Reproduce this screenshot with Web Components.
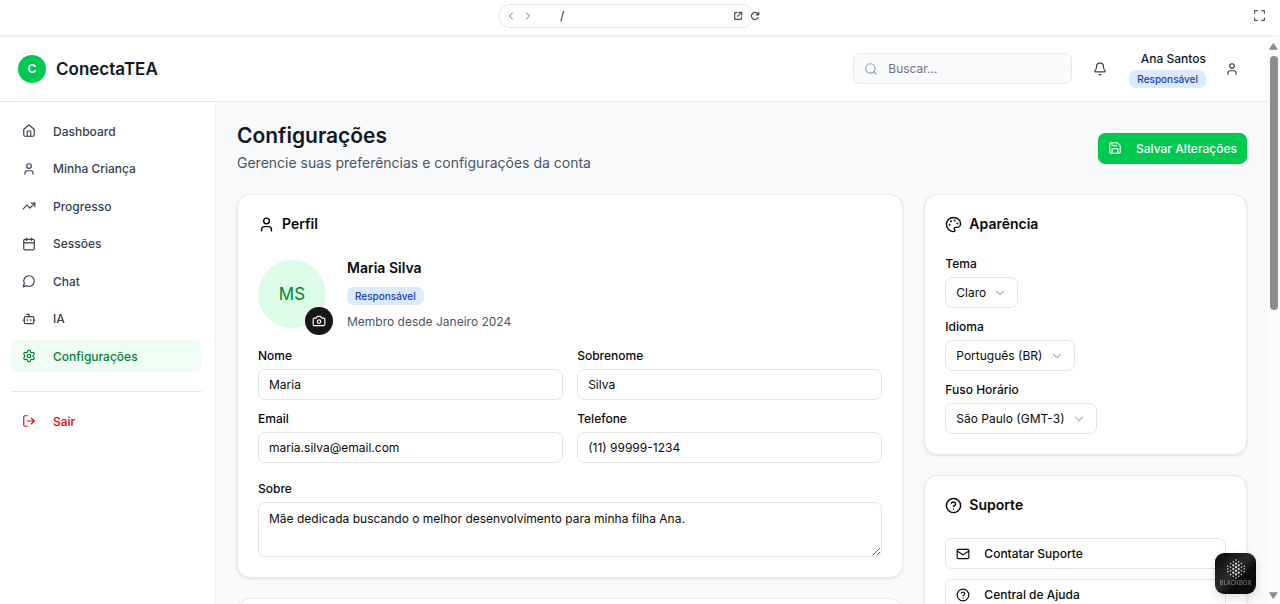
<!DOCTYPE html>
<html lang="pt-BR">
<head>
<meta charset="utf-8">
<meta name="viewport" content="width=device-width, initial-scale=1">
<title>ConectaTEA – Configurações</title>
<style>
html, body { margin: 0; height: 100%; }
body { font-family: Inter, "Liberation Sans", sans-serif; font-size: 12px; color: #0a0a0a; background: #fff; overflow: hidden; }
</style>
</head>
<body>
<preview-shell>
  <app-header slot="header"></app-header>
  <app-sidebar slot="sidebar"></app-sidebar>
  <settings-page></settings-page>
</preview-shell>

<script>
const ICONS = {
  home: '<path d="M15 21v-8a1 1 0 0 0-1-1h-4a1 1 0 0 0-1 1v8"/><path d="M3 10a2 2 0 0 1 .709-1.528l7-5.999a2 2 0 0 1 2.582 0l7 5.999A2 2 0 0 1 21 10v9a2 2 0 0 1-2 2H5a2 2 0 0 1-2-2z"/>',
  user: '<path d="M19 21v-2a4 4 0 0 0-4-4H9a4 4 0 0 0-4 4v2"/><circle cx="12" cy="7" r="4"/>',
  trend: '<path d="M16 7h6v6"/><path d="m22 7-8.500 8.500-5-5L2 17"/>',
  calendar: '<path d="M8 2v4M16 2v4M3 10h18"/><rect width="18" height="18" x="3" y="4" rx="2"/>',
  chat: '<path d="M7.900 20A9 9 0 1 0 4 16.100L2 22Z"/>',
  bot: '<path d="M12 8V4H8"/><rect width="16" height="12" x="4" y="8" rx="2"/><path d="M2 14h2M20 14h2M15 13v2M9 13v2"/>',
  settings: '<path d="M9.671 4.136a2.340 2.340 0 0 1 4.659 0 2.340 2.340 0 0 0 3.319 1.915 2.340 2.340 0 0 1 2.330 4.033 2.340 2.340 0 0 0 0 3.831 2.340 2.340 0 0 1-2.330 4.033 2.340 2.340 0 0 0-3.319 1.915 2.340 2.340 0 0 1-4.659 0 2.340 2.340 0 0 0-3.320-1.915 2.340 2.340 0 0 1-2.330-4.033 2.340 2.340 0 0 0 0-3.831A2.340 2.340 0 0 1 6.350 6.051a2.340 2.340 0 0 0 3.319-1.915"/><circle cx="12" cy="12" r="3"/>',
  logout: '<path d="m16 17 5-5-5-5M21 12H9M9 21H5a2 2 0 0 1-2-2V5a2 2 0 0 1 2-2h4"/>',
  search: '<circle cx="11" cy="11" r="8"/><path d="m21 21-4.300-4.300"/>',
  bell: '<path d="M10.268 21a2 2 0 0 0 3.464 0"/><path d="M3.262 15.326A1 1 0 0 0 4 17h16a1 1 0 0 0 .740-1.673C19.410 13.956 18 12.499 18 8A6 6 0 0 0 6 8c0 4.499-1.411 5.956-2.738 7.326"/>',
  save: '<path d="M15.200 3a2 2 0 0 1 1.400.600l3.800 3.800a2 2 0 0 1 .600 1.400V19a2 2 0 0 1-2 2H5a2 2 0 0 1-2-2V5a2 2 0 0 1 2-2z"/><path d="M17 21v-7a1 1 0 0 0-1-1H8a1 1 0 0 0-1 1v7M7 3v4a1 1 0 0 0 1 1h7"/>',
  camera: '<path d="M14.500 4h-5L7 7H4a2 2 0 0 0-2 2v9a2 2 0 0 0 2 2h16a2 2 0 0 0 2-2V9a2 2 0 0 0-2-2h-3z"/><circle cx="12" cy="13" r="3"/>',
  palette: '<path d="M12 22a1 1 0 0 1 0-20 10 9 0 0 1 10 9 5 5 0 0 1-5 5h-2.250a1.750 1.750 0 0 0-1.400 2.800l.300.400a1.750 1.750 0 0 1-1.400 2.800z"/><g fill="currentColor"><circle cx="13.500" cy="6.500" r=".5"/><circle cx="17.500" cy="10.500" r=".5"/><circle cx="6.500" cy="12.500" r=".5"/><circle cx="8.500" cy="7.500" r=".5"/></g>',
  help: '<circle cx="12" cy="12" r="10"/><path d="M9.090 9a3 3 0 0 1 5.830 1c0 2-3 3-3 3M12 17h.01"/>',
  mail: '<rect width="20" height="16" x="2" y="4" rx="2"/><path d="m22 7-8.991 5.727a2 2 0 0 1-2.009 0L2 7"/>',
  down: '<path d="m6 9 6 6 6-6"/>',
  left: '<path d="m15 18-6-6 6-6"/>',
  right: '<path d="m9 18 6-6-6-6"/>',
  external: '<path d="M10 4H4v16h16v-6M14 3h7v7M20 4l-9 9"/>',
  reload: '<path d="M19.500 16A8.500 8.500 0 1 1 18 6l3 3M21 3v6h-6"/>',
  expand: '<path d="M3 8V3h5M16 3h5v5M21 16v5h-5M8 21H3v-5"/>',
  caretUp: '<path d="m12 6 8 12H4Z" fill="currentColor"/>',
  caretDown: '<path d="m12 18 8-12H4Z" fill="currentColor"/>'
};

/* Registers an element whose shadow root is rendered from its attributes. */
function define(tag, render) {
  customElements.define(tag, class extends HTMLElement {
    constructor() { super(); this.attachShadow({ mode: 'open' }); }
    connectedCallback() {
      const t = document.createElement('template');
      t.innerHTML = '<style>*{box-sizing:border-box}:host{box-sizing:border-box}button,input,select,textarea{font:inherit;color:inherit;margin:0}</style>'
        + render(name => this.getAttribute(name) || '');
      this.shadowRoot.replaceChildren(t.content.cloneNode(true));
    }
  });
}

define('app-icon', a => `
<style>:host{display:block;flex:none}svg{display:block}</style>
<svg width="${a('size') || 14}" height="${a('size') || 14}" viewBox="0 0 24 24" fill="none" stroke="currentColor" stroke-width="${a('weight') || 2}" stroke-linecap="round" stroke-linejoin="round" aria-hidden="true">${ICONS[a('name')]}</svg>`);

define('ui-badge', () => `
<style>:host{display:inline-flex;align-items:center;height:18px;padding:0 8px;border-radius:7px;background:#dbeafe;color:#193cb8;font-size:10px;font-weight:500;line-height:16px}</style>
<slot></slot>`);

define('preview-bar', () => `
<style>
:host{display:grid;grid-template-columns:486fr 256px 514fr;align-items:center;flex:none;height:37px;padding:0 12px 4px;border-bottom:2px solid #f4f4f5;color:#52525b}
.url{grid-column:2;display:flex;align-items:center;height:24px;border:1px solid #e8e8ea;border-radius:12px;padding-left:3px}
button{display:grid;place-items:center;width:17px;height:20px;padding:0;border:0;background:none;color:inherit}
.nav{color:#71717a}
input{flex:1;min-width:0;border:0;padding:0 0 0 24px;background:none;color:#27272a;outline:0;line-height:16px}
.reload{margin-right:-10px}
.full{justify-self:end}
</style>
<div class="url">
<button class="nav" aria-label="Voltar"><app-icon name="left" size="12"></app-icon></button>
<button class="nav" aria-label="Avançar"><app-icon name="right" size="12"></app-icon></button>
<input aria-label="Endereço" value="/">
<button aria-label="Abrir em nova aba"><app-icon name="external" size="10" weight="3"></app-icon></button>
<button class="reload" aria-label="Recarregar"><app-icon name="reload" size="10" weight="3"></app-icon></button>
</div>
<button class="full" aria-label="Tela cheia"><app-icon name="expand" size="13"></app-icon></button>`);

define('scroll-rail', () => `
<style>
:host{display:flex;flex-direction:column;align-items:center;width:13px;padding:4px 0 3px;background:#fcfcfc;color:#8b8b8b}
.track{flex:1;width:8px;margin:4px 0}
.thumb{height:48%;background:#8b8b8b;border-radius:4px}
</style>
<app-icon name="caretUp" size="11"></app-icon><div class="track"><div class="thumb"></div></div><app-icon name="caretDown" size="11"></app-icon>`);

define('blackbox-badge', () => {
  /* Columns of dots, tallest in the middle: [x, y positions]. */
  const cols = [[3,[8,11,14]],[6,[5,9,13,17]],[9,[3,7,11,15,19]],[12,[1,5,9,13,17,21]],[15,[3,7,11,15,19]],[18,[5,9,13,17]],[21,[8,11,14]]];
  const dots = cols.map(([x, ys]) => ys.map(y =>
    `<circle cx="${x}" cy="${y}" r="${Math.abs(x - 12) < 5 && Math.abs(y - 11) < 7 ? 1.2 : 0.8}"/>`).join('')).join('');
  return `
<style>
:host{display:block}
button{display:flex;flex-direction:column;align-items:center;width:41px;height:41px;padding:6px 0 0;border:0;border-radius:9px;background:linear-gradient(135deg,#050505,#2b2b2b 45%,#0a0a0a 65%);box-shadow:0 4px 10px #0002}
svg{display:block}
span{font-size:6px;line-height:8px;color:#888}
</style>
<button aria-label="Blackbox"><svg width="20" height="20" viewBox="1 0 22 22" fill="#e5e5e5">${dots}</svg><span>BLACKBOX</span></button>`;
});

define('preview-shell', () => `
<style>
:host{display:flex;flex-direction:column;height:100vh}
.view{flex:1;min-height:0;display:flex}
.app{flex:1;min-width:0;display:flex;flex-direction:column;overflow:hidden}
.cols{flex:1;min-height:0;display:flex}
main{flex:1;min-width:0;background:#f9fafb;overflow:hidden}
blackbox-badge{position:fixed;right:24px;bottom:10px}
</style>
<preview-bar></preview-bar>
<div class="view">
<div class="app"><slot name="header"></slot><div class="cols"><slot name="sidebar"></slot><main><slot></slot></main></div></div>
<scroll-rail></scroll-rail>
</div>
<blackbox-badge></blackbox-badge>`);

define('app-header', () => `
<style>
:host{display:flex;align-items:center;justify-content:space-between;flex:none;height:65px;padding:0 21px 1px 18px;border-bottom:1px solid #e5e7eb;background:#fff}
.brand,.tools{display:flex;align-items:center}
.brand{gap:10px;font-size:17px;font-weight:600;color:#101828}
.mark{display:grid;place-items:center;width:28px;height:28px;border-radius:50%;background:#00c950;color:#fff;font-size:12px}
.search{display:flex;align-items:center;gap:10px;width:219px;height:31px;padding:0 10px;border:1px solid #e5e7eb;border-radius:7px;background:#f9fafb;color:#99a1af}
.search input{flex:1;min-width:0;border:0;padding:0;background:none;outline:0;color:#0a0a0a}
input::placeholder{color:#717182;opacity:1}
button{display:grid;place-items:center;width:28px;height:28px;padding:0;border:0;background:none;color:#364153}
.bell{margin:0 15px 0 14px}
.user{display:flex;flex-direction:column;align-items:flex-end;gap:2px;margin-right:12px;font-weight:500;line-height:18px;color:#101828}
</style>
<div class="brand"><span class="mark">C</span><span>ConectaTEA</span></div>
<div class="tools">
<div class="search"><app-icon name="search"></app-icon><input type="search" aria-label="Buscar" placeholder="Buscar..."></div>
<button class="bell" aria-label="Notificações"><app-icon name="bell"></app-icon></button>
<div class="user"><span>Ana Santos</span><ui-badge>Responsável</ui-badge></div>
<button aria-label="Conta"><app-icon name="user"></app-icon></button>
</div>`);

define('nav-item', a => `
<style>
:host{display:block;color:#364153}
:host([active]){color:#008236}
:host([danger]){color:#e7000b}
a{display:flex;align-items:center;gap:17px;height:32px;padding:0 11px;border-radius:7px;color:inherit;text-decoration:none;font-weight:500}
:host([active]) a{background:#f0fdf4}
</style>
<a href="#"><app-icon name="${a('icon')}"></app-icon><slot></slot></a>`);

define('app-sidebar', () => `
<style>
:host{display:block;flex:none;width:216px;padding:13px 13px 0 11px;border-right:1px solid #f0f1f3;background:#fff}
nav{display:flex;flex-direction:column;justify-content:space-between;height:257px}
.exit{margin-top:19px;padding-top:13px;border-top:1px solid #e8e9eb}
</style>
<nav aria-label="Principal">
<nav-item icon="home">Dashboard</nav-item>
<nav-item icon="user">Minha Criança</nav-item>
<nav-item icon="trend">Progresso</nav-item>
<nav-item icon="calendar">Sessões</nav-item>
<nav-item icon="chat">Chat</nav-item>
<nav-item icon="bot">IA</nav-item>
<nav-item icon="settings" active>Configurações</nav-item>
</nav>
<div class="exit"><nav-item icon="logout" danger>Sair</nav-item></div>`);

define('ui-card', a => `
<style>
:host{display:block;padding:20px;border:1px solid #e9eaec;border-radius:13px;background:#fff;box-shadow:0 1px 3px #0000001a}
h2{display:flex;align-items:center;gap:7px;margin:0 0 24px;font-size:14px;line-height:18px;font-weight:600}
</style>
<h2><app-icon name="${a('icon')}" size="17"></app-icon>${a('heading')}</h2><slot></slot>`);

define('text-field', a => `
<style>
:host{display:flex;flex-direction:column;gap:6px;min-width:0}
label{line-height:14px;font-weight:500}
input,textarea{display:block;width:100%;border:1px solid #e5e5e5;border-radius:7px;padding:0 10px;background:#fff;outline:0}
input{height:31px}
textarea{height:55px;padding-top:7px;line-height:18px;resize:vertical}
</style>
<label for="f">${a('label')}</label>
${a('rows') ? `<textarea id="f">${a('value')}</textarea>` : `<input id="f" type="${a('type') || 'text'}" value="${a('value')}">`}`);

define('select-field', a => `
<style>
:host{display:flex;flex-direction:column;align-items:flex-start;gap:6px}
label{line-height:14px;font-weight:500}
div{display:grid;align-items:center}
select,app-icon{grid-area:1/1}
select{appearance:none;height:31px;padding:0 31px 0 10px;border:1px solid #e5e5e5;border-radius:7px;background:#fff;outline:0}
app-icon{justify-self:end;margin-right:11px;color:#b5b5b5;pointer-events:none}
</style>
<label for="s">${a('label')}</label>
<div><select id="s"><option>${a('value')}</option></select><app-icon name="down"></app-icon></div>`);

define('action-button', a => `
<style>
:host{display:block}
button{display:flex;align-items:center;gap:14px;width:100%;height:31px;padding:0 10px;border:1px solid #e5e5e5;border-radius:7px;background:#fff;font-weight:500}
:host([primary]) button{padding:0 9px;border-color:#00c950;background:#00c950;color:#fff}
</style>
<button><app-icon name="${a('icon')}"></app-icon><span><slot></slot></span></button>`);

define('profile-summary', () => `
<style>
:host{display:flex;align-items:center;gap:21px}
.avatar{position:relative;flex:none;display:grid;place-items:center;width:68px;height:68px;border-radius:50%;background:#dcfce7;color:#008236;font-size:17px}
button{position:absolute;right:-7px;bottom:-7px;display:grid;place-items:center;width:28px;height:28px;padding:0;border:0;border-radius:50%;background:#171717;color:#fff}
.info{display:flex;flex-direction:column;align-items:flex-start;gap:8px}
h3{margin:0;font-size:14px;line-height:22px;font-weight:600}
p{margin:0;line-height:17px;color:#4a5565}
</style>
<div class="avatar">MS<button aria-label="Alterar foto"><app-icon name="camera"></app-icon></button></div>
<div class="info"><h3>Maria Silva</h3><ui-badge>Responsável</ui-badge><p>Membro desde Janeiro 2024</p></div>`);

define('settings-page', () => `
<style>
:host{display:block;padding:20px 20px 20px 21px}
header{display:flex;align-items:center;justify-content:space-between;margin-bottom:20px}
h1{margin:0 0 2px;font-size:21px;line-height:28px;font-weight:600;color:#101828}
p{margin:0;font-size:14px;line-height:22px;color:#4a5565}
.grid{display:grid;grid-template-columns:repeat(3,minmax(0,1fr));column-gap:21px;align-items:start}
.col{display:grid;gap:20px}
.wide{grid-column:span 2}
.form{display:grid;grid-template-columns:1fr 1fr;gap:12px 14px;margin:19px 0}
.stack{display:grid;gap:12px}
.links{display:grid;gap:10px}
</style>
<header><div><h1>Configurações</h1><p>Gerencie suas preferências e configurações da conta</p></div><action-button primary icon="save">Salvar Alterações</action-button></header>
<div class="grid">
<div class="col wide">
<ui-card icon="user" heading="Perfil">
<profile-summary></profile-summary>
<div class="form">
<text-field label="Nome" value="Maria"></text-field>
<text-field label="Sobrenome" value="Silva"></text-field>
<text-field label="Email" type="email" value="maria.silva@email.com"></text-field>
<text-field label="Telefone" type="tel" value="(11) 99999-1234"></text-field>
</div>
<text-field label="Sobre" rows="2" value="Mãe dedicada buscando o melhor desenvolvimento para minha filha Ana."></text-field>
</ui-card>
<ui-card icon="bell" heading=""></ui-card>
</div>
<div class="col">
<ui-card icon="palette" heading="Aparência"><div class="stack">
<select-field label="Tema" value="Claro"></select-field>
<select-field label="Idioma" value="Português (BR)"></select-field>
<select-field label="Fuso Horário" value="São Paulo (GMT-3)"></select-field>
</div></ui-card>
<ui-card icon="help" heading="Suporte"><div class="links">
<action-button icon="mail">Contatar Suporte</action-button>
<action-button icon="help">Central de Ajuda</action-button>
</div></ui-card>
</div>
</div>`);
</script>
</body>
</html>
